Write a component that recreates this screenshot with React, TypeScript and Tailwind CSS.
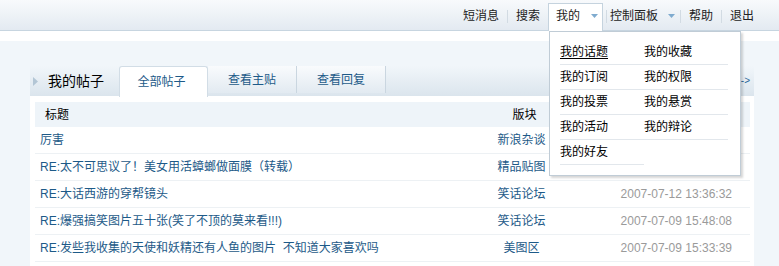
import React from 'react';

const rows = [
  { title: '厉害', forum: '新浪杂谈', date: '2007-07-13 10:21:05' },
  { title: 'RE:太不可思议了！美女用活蟑螂做面膜（转载）', forum: '精品贴图', date: '2007-07-12 17:02:41' },
  { title: 'RE:大话西游的穿帮镜头', forum: '笑话论坛', date: '2007-07-12 13:36:32' },
  { title: 'RE:爆强搞笑图片五十张(笑了不顶的莫来看!!!)', forum: '笑话论坛', date: '2007-07-09 15:48:08' },
  { title: 'RE:发些我收集的天使和妖精还有人鱼的图片\u00a0\u00a0不知道大家喜欢吗', forum: '美图区', date: '2007-07-09 15:33:39' },
];

const menu = ['我的话题', '我的收藏', '我的订阅', '我的权限', '我的投票', '我的悬赏', '我的活动', '我的辩论', '我的好友'];

function Arrow({ gap }: { gap: string }) {
  return (
    <svg width="7" height="4" viewBox="0 0 7 4" className={gap}>
      <polygon points="0,0 7,0 3.5,4" fill="#7fabcf" />
    </svg>
  );
}

function Sep() {
  return <span className="w-px h-[13px] bg-[#d2dbe3]" />;
}

export default function App() {
  return (
    <div className="relative w-[779px] h-[266px] overflow-hidden bg-[#f1f6fa] font-['Liberation_Sans','Noto_Sans_CJK_SC',sans-serif] text-[12px] leading-none">
      {/* Top bar */}
      <div className="h-[31px] border-b border-[#c7d5e0] bg-gradient-to-b from-[#f8fafc] to-[#e3eaf1] flex justify-end items-end pr-[25px]">
        <div className="flex items-center h-[27px] text-[#222]">
          <span className="px-2 pb-[2px]">短消息</span>
          <Sep />
          <span className="px-2 pb-[2px]">搜索</span>
          <span className="relative z-20 flex items-center h-[28px] -mb-[1px] bg-white border border-b-0 border-[#c5d3de] pl-[7px] pr-[4px] pb-[3px]">
            我的
            <Arrow gap="ml-[11px]" />
          </span>
          <span className="ml-[3px] flex items-center"><Sep /></span>
          <span className="flex items-center pl-[3px] pr-[5px] pb-[2px]">
            控制面板
            <Arrow gap="ml-[10px]" />
          </span>
          <Sep />
          <span className="px-2 pb-[2px]">帮助</span>
          <Sep />
          <span className="pl-2 pb-[2px]">退出</span>
        </div>
      </div>
      <div className="h-[10px] bg-white" />

      {/* Main */}
      <div className="pl-[30px] pr-[25px] pt-[25px]">
        <div className="h-[30px] flex items-stretch bg-gradient-to-b from-[#f1f6fa] to-[#dbe5ed]">
          <div className="w-[89px] flex items-center pl-[3px]">
            <svg width="5" height="9" viewBox="0 0 5 9">
              <polygon points="0,0 5,4.5 0,9" fill="#b3c6d5" />
            </svg>
            <span className="ml-[10px] text-[14px] text-black">我的帖子</span>
          </div>
          <div className="relative z-[1] w-[89px] h-[31px] bg-white border border-b-0 border-[#d2dde6] rounded-t-[3px] flex items-center justify-center pr-[4px] text-[#1d5a88]">
            全部帖子
          </div>
          <div className="w-[89px] h-[27px] bg-gradient-to-b from-[#f9fbfd] to-[#e2eaf1] border-r border-[#cad6e0] flex items-center justify-center text-[#1d5a88]">
            查看主贴
          </div>
          <div className="w-[89px] h-[27px] bg-gradient-to-b from-[#f9fbfd] to-[#e2eaf1] border-r border-[#cad6e0] flex items-center justify-center text-[#1d5a88]">
            查看回复
          </div>
          <div className="ml-auto flex items-center pr-[4px] text-[10px] text-[#2b6a9a]">-&gt;</div>
        </div>

        <div className="bg-white pt-[6px] px-[5px] pr-[4px] h-[200px]">
          <div className="grid grid-cols-[1fr_103px_177px] h-[25px] items-center bg-[#eef4f9] text-black">
            <span className="pl-[10px]">标题</span>
            <span className="text-center pl-[6px]">版块</span>
            <span />
          </div>
          {rows.map((r) => (
            <div key={r.title} className="grid grid-cols-[1fr_103px_177px] h-[27px] items-center border-b border-[#edf1f4]">
              <span className="pl-[5px] text-[#1d5a88] whitespace-pre">{r.title}</span>
              <span className="text-center text-[#1d5a88]">{r.forum}</span>
              <span className="text-right pr-[18px] text-[#9a9a9a]">{r.date}</span>
            </div>
          ))}
        </div>
      </div>

      {/* Dropdown menu */}
      <div className="absolute z-10 left-[549px] top-[31px] w-[192px] h-[145px] bg-white border border-[#c0ccd6] shadow-[2px_2px_2px_rgba(0,0,0,0.16)] pl-[10px] pt-[8px]">
        <div className="grid grid-cols-[84px_84px]">
          {menu.map((m, i) => (
            <div key={m} className="h-[25px] flex items-center border-b border-[#e2e7ec] text-black">
              <span className={i === 0 ? 'underline underline-offset-2' : ''}>{m}</span>
            </div>
          ))}
        </div>
      </div>
    </div>
  );
}
